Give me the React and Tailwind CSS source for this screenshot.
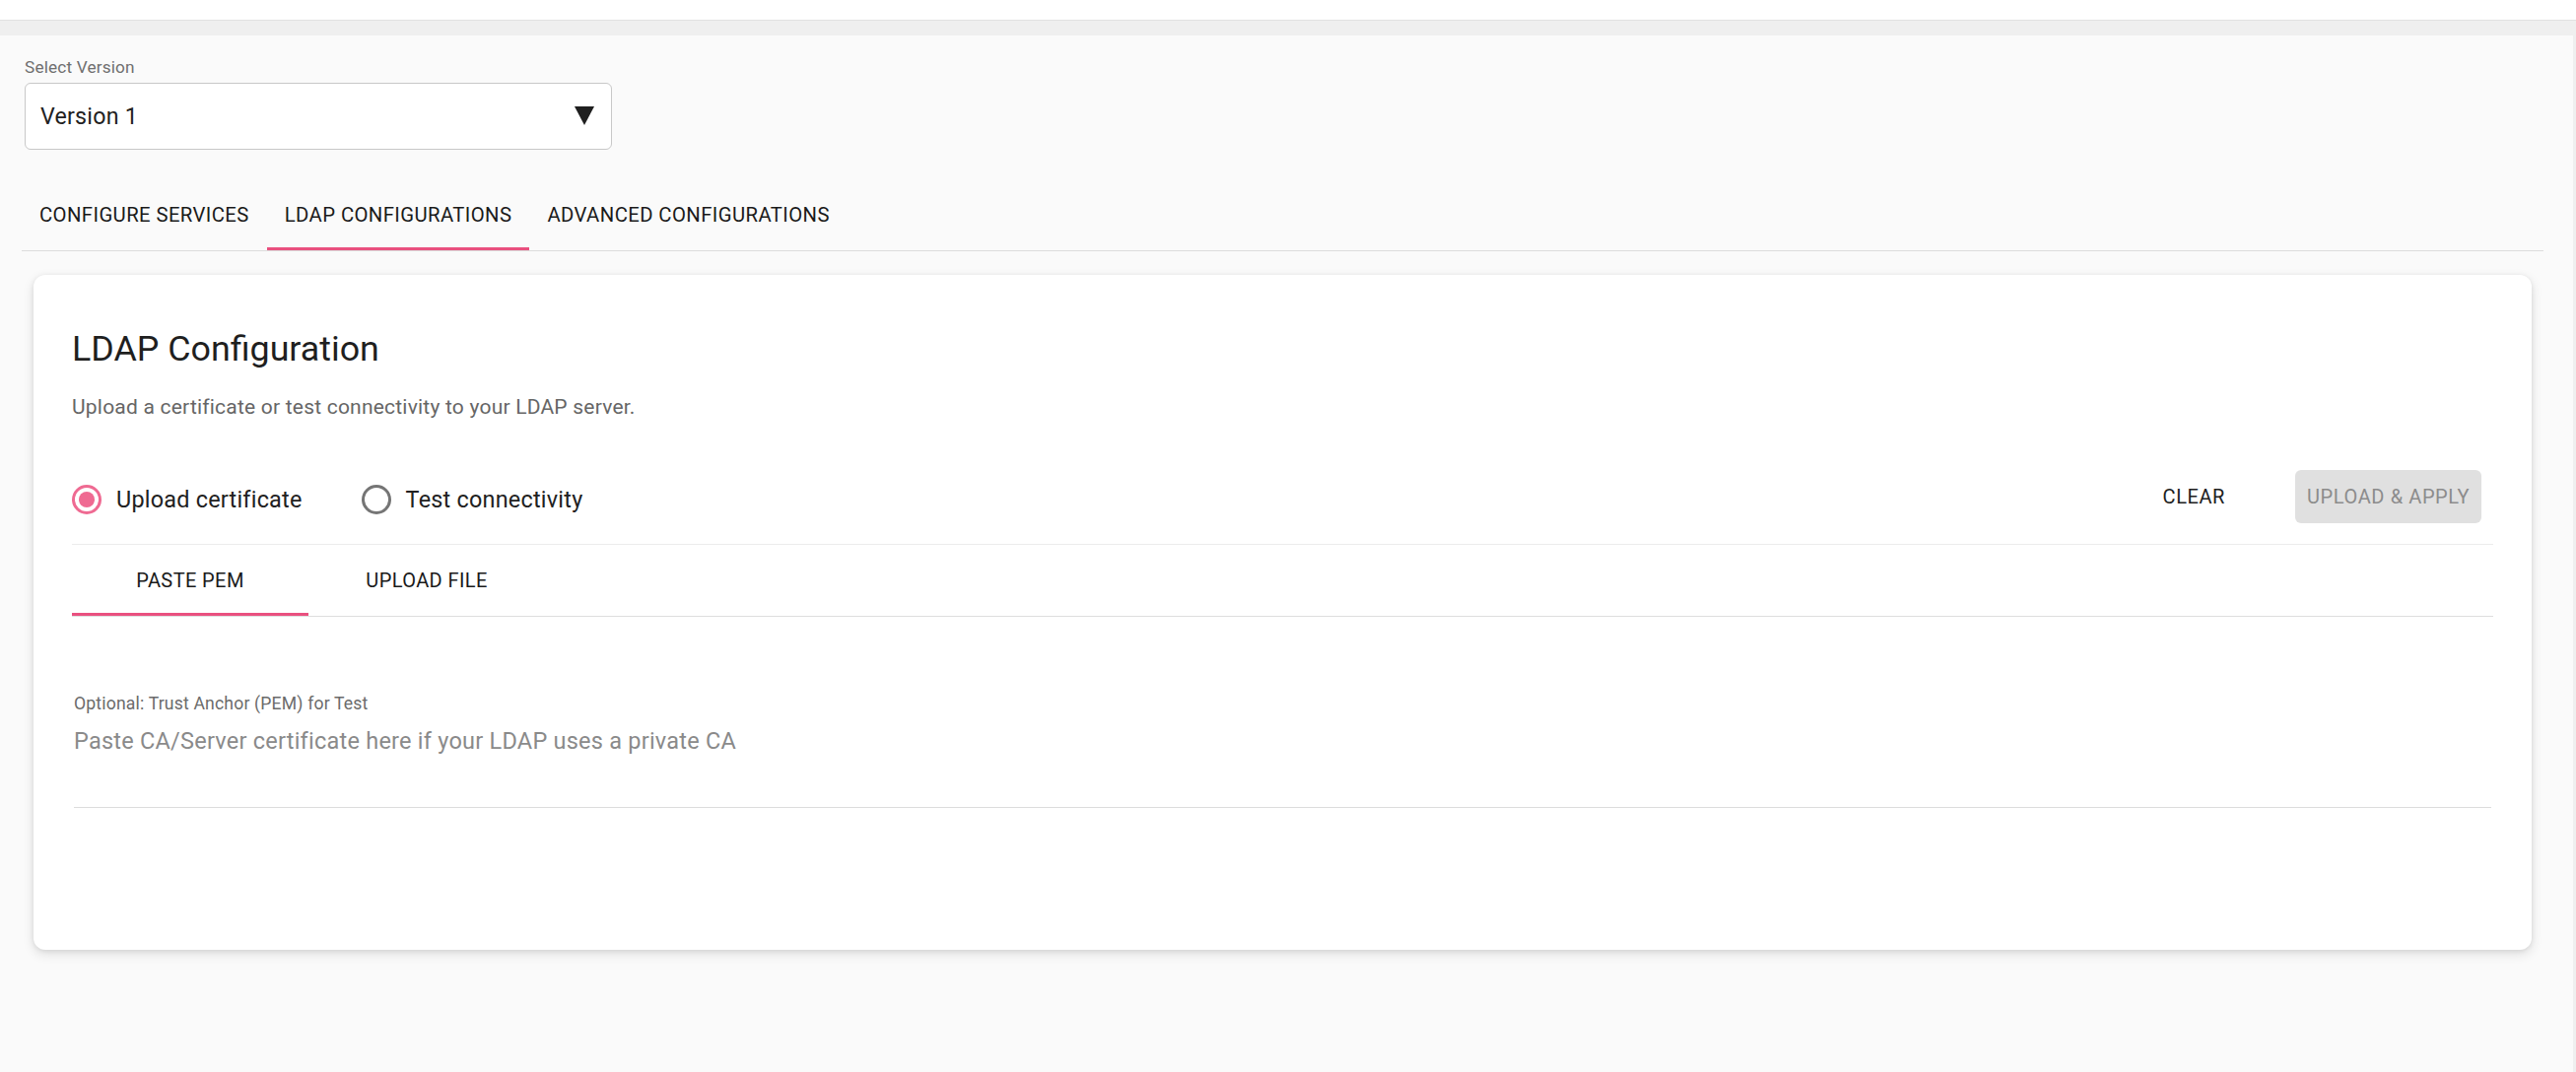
import React from "react";

function Radio({ checked, label }) {
  return (
    <label className="flex items-center gap-[15px] cursor-pointer">
      {checked ? (
        <span className="flex h-[30px] w-[30px] items-center justify-center rounded-full border-[3px] border-[#ef6a92]">
          <span className="h-[16px] w-[16px] rounded-full bg-[#ef6a92]" />
        </span>
      ) : (
        <span className="h-[30px] w-[30px] rounded-full border-[3px] border-[#757575]" />
      )}
      <span className="text-[23.4px] leading-[40px] text-[#212121] tracking-[0.01em]">{label}</span>
    </label>
  );
}

export default function App() {
  return (
    <div className="w-full h-[1088px] overflow-hidden bg-white font-['Roboto',sans-serif]">
      <div className="h-[21px] bg-white border-b border-[#e2e2e2]" />
      <div className="h-[1067px] bg-[#efefef] pt-[15px] pr-[3px]">
        <div className="h-full bg-[#fafafa] pl-[22px] pr-[30px]">
          {/* Version select */}
          <div className="pt-[22px] pl-[3px]">
            <div className="text-[17.2px] leading-[20px] text-[#6f6f6f] tracking-[0.01em]">Select Version</div>
            <div className="mt-[6px] flex h-[68px] w-[596px] items-center justify-between rounded-[6px] border border-[#c8c8c8] bg-white pl-[15px] pr-[17px]">
              <span className="text-[23.2px] leading-[36px] text-[#212121] tracking-[0.01em]">Version 1</span>
              <svg width="20" height="20" viewBox="0 0 20 20" className="mt-[-2px]">
                <polygon points="0,1 20,1 10,20" fill="#1f1f1f" />
              </svg>
            </div>
          </div>

          {/* Top tabs */}
          <div className="mt-[30px] flex border-b border-[#dcdcdc]">
            <div className="flex h-[72px] items-center px-[18px] text-[20.3px] text-[#1a1a1a] tracking-[0.02em]">CONFIGURE SERVICES</div>
            <div className="relative flex h-[72px] items-center px-[18px] text-[20.3px] text-[#1a1a1a] tracking-[0.02em]">
              LDAP CONFIGURATIONS
              <span className="absolute bottom-0 left-0 right-0 h-[3px] bg-[#e9507f]" />
            </div>
            <div className="flex h-[72px] items-center px-[18px] text-[20.3px] text-[#1a1a1a] tracking-[0.02em]">ADVANCED CONFIGURATIONS</div>
          </div>

          {/* Card */}
          <div className="mx-[12px] mt-[24px] h-[685px] rounded-[12px] bg-white px-[39px] pt-[51px] shadow-[0_4px_12px_rgba(0,0,0,0.12),0_1px_5px_rgba(0,0,0,0.08)]">
            <h2 className="text-[35.8px] leading-[48px] text-[#1f1f1f] font-normal">LDAP Configuration</h2>
            <p className="mt-[19px] text-[21px] leading-[32px] text-[#666666] tracking-[0.01em]">
              Upload a certificate or test connectivity to your LDAP server.
            </p>

            <div className="mt-[48px] flex h-[54px] items-center justify-between">
              <div className="mt-[5px] flex items-center gap-[60px]">
                <Radio checked label="Upload certificate" />
                <Radio label="Test connectivity" />
              </div>
              <div className="mr-[12px] flex items-center">
                <button className="h-[54px] px-[12px] text-[20px] text-[#212121] tracking-[0.03em]">CLEAR</button>
                <button className="ml-[59px] h-[54px] rounded-[6px] bg-[#e0e0e0] px-[12px] text-[20px] text-[#8c8c8c] tracking-[0.03em]">UPLOAD &amp; APPLY</button>
              </div>
            </div>

            <div className="mt-[21px] h-px bg-[#ececec]" />

            {/* Inner tabs */}
            <div className="flex border-b border-[#dedede]">
              <div className="relative flex h-[72px] w-[240px] items-center justify-center text-[20px] text-[#1a1a1a] tracking-[0.02em]">
                PASTE PEM
                <span className="absolute bottom-0 left-0 right-0 h-[3px] bg-[#e9507f]" />
              </div>
              <div className="flex h-[72px] w-[240px] items-center justify-center text-[20px] text-[#1a1a1a] tracking-[0.02em]">UPLOAD FILE</div>
            </div>

            {/* Text field */}
            <div className="mx-[2px] mt-[78px] border-b border-[#dcdcdc]">
              <div className="text-[17.6px] leading-[20px] text-[#6b6b6b] tracking-[0.01em]">Optional: Trust Anchor (PEM) for Test</div>
              <div className="mt-[12px] h-[83px] text-[23.5px] leading-[32px] text-[#8a8a8a] tracking-[0.01em]">
                Paste CA/Server certificate here if your LDAP uses a private CA
              </div>
            </div>
          </div>
        </div>
      </div>
    </div>
  );
}
